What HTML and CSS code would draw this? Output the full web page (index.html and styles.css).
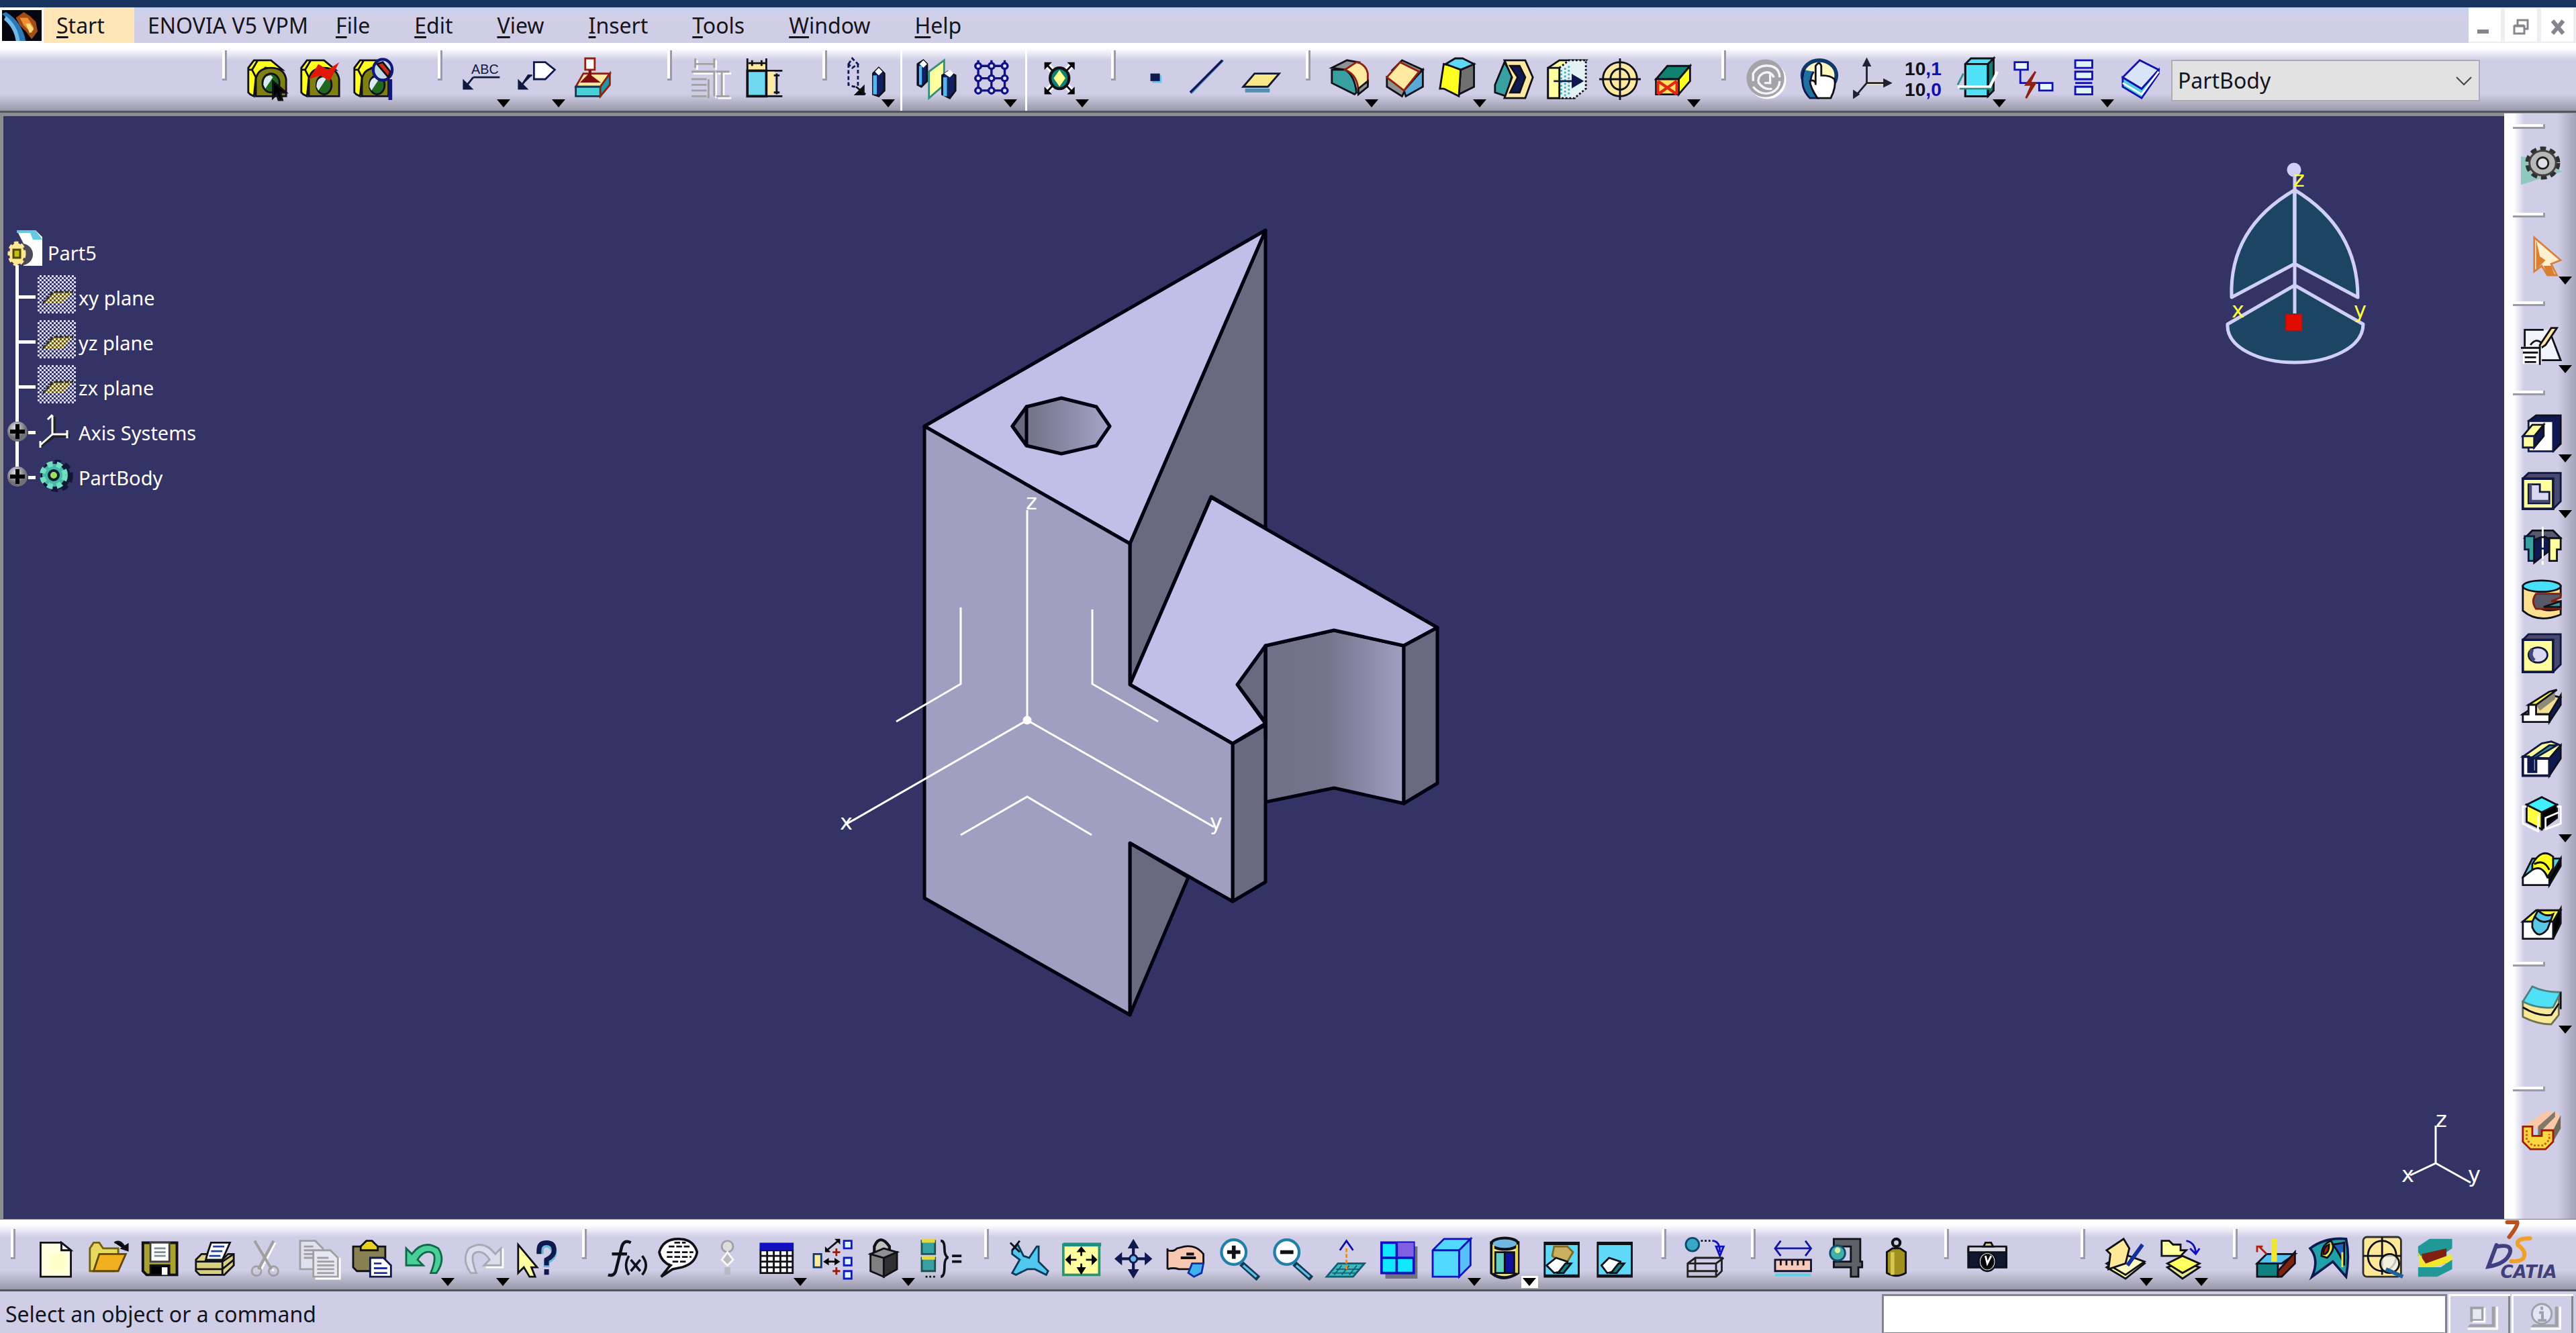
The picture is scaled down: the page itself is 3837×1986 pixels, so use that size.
FILE: index.html
```html
<!DOCTYPE html>
<html lang="en">
<head>
<meta charset="utf-8">
<title>CATIA V5 - Part5</title>
<link rel="stylesheet" href="styles.css">
</head>
<body>
<div class="titlebar"></div>

<header class="menubar">
  <svg class="app-logo" viewBox="0 0 20 16" preserveAspectRatio="none"><rect width="20" height="16" fill="#05060f"/><path d="M0 2q6 5 8 14h4Q10 6 2 1z" fill="#2a78b8"/><path d="M1 5q5 4 6 11h2Q8 8 2 3z" fill="#70b8e8"/><path d="M7 4l4-3 3 2 3 3 1 5-3 4-3-4-3-3z" fill="#a04c18"/><path d="M9 4l4 0 3 5-1 3-4-4z" fill="#f09030"/><path d="M12 7l2 0 2 3-2 2z" fill="#ffe080"/></svg>
  <nav class="menus" aria-label="Main menu">
    <button class="menu start"><u>S</u>tart</button>
    <button class="menu vpm">ENOVIA V5 VPM</button>
    <button class="menu"><u>F</u>ile</button>
    <button class="menu"><u>E</u>dit</button>
    <button class="menu"><u>V</u>iew</button>
    <button class="menu"><u>I</u>nsert</button>
    <button class="menu"><u>T</u>ools</button>
    <button class="menu"><u>W</u>indow</button>
    <button class="menu"><u>H</u>elp</button>
  </nav>
  <div class="window-controls">
    <button aria-label="Minimize"><svg viewBox="0 0 48 50"><path d="M13 34h17" stroke-width="6"/></svg></button>
    <button aria-label="Restore"><svg viewBox="0 0 48 50"><path d="M19 24v-7h15v13h-5M19 17h15" stroke-width="3"/><path d="M14 26h15v11H14zM14 25h15" stroke-width="3"/></svg></button>
    <button aria-label="Close"><svg viewBox="0 0 48 50"><path d="M17 18l16 19M33 18L17 37" stroke-width="6"/></svg></button>
  </div>
</header>

<div class="toolbar top-bar">
  <div></div>
  <div class="group">
    <i class="grip"></i>
    <button class="tool" aria-label="Select feature"><svg viewBox="0 0 22 22"><path d="M1 18V5l3-4h9l6 5-9-1-5 5-1 10-2-1z" fill="#ffff20"/><path d="M3 6l3-5M3 6l2 4M3 6H1"/><path d="M5 20V11q1-6 8-6t8 6v9z" fill="#808010"/><ellipse cx="13" cy="13" rx="4.500" ry="5" fill="#206820"/><path d="M9 14q0-5 4-5l1 1-4 6z" fill="#dde8f0" stroke="none"/><path d="M14 12v9l2-2 1 3h2l-1-4h3z" fill="#000"/></svg></button>
    <button class="tool" aria-label="Update feature"><svg viewBox="0 0 22 22"><path d="M1 18V5l3-4h9l6 5-9-1-5 5-1 10-2-1z" fill="#ffff20"/><path d="M3 6l3-5M3 6l2 4M3 6H1"/><path d="M5 20V11q1-6 8-6t8 6v9z" fill="#808010"/><ellipse cx="13" cy="14" rx="4" ry="5" fill="#206820"/><path d="M9 15q0-5 4-5l1 1-4 6z" fill="#dde8f0" stroke="none"/><path d="M5 11l5-8 5 3 6-4-5 10-5-3z" fill="#e01808" stroke="none"/></svg></button>
    <button class="tool" aria-label="Inspect feature"><svg viewBox="0 0 22 22"><path d="M1 18V5l3-4h9l6 5-9-1-5 5-1 10-2-1z" fill="#ffff20"/><path d="M3 6l3-5M3 6l2 4M3 6H1"/><path d="M5 20V11q1-6 8-6t6 6v9z" fill="#808010"/><ellipse cx="13" cy="14" rx="4" ry="5" fill="#206820"/><path d="M9 15q0-5 4-5l1 1-4 6z" fill="#dde8f0" stroke="none"/><ellipse cx="16" cy="6" rx="5" ry="5.500" fill="#c0d8e8" stroke="#101880" stroke-width="1.500"/><path d="M13 3l6 7 1-3-4-5z" fill="#d02818"/><path d="M20 11v11" stroke="#101880" stroke-width="2"/></svg></button>
  </div>
  <div class="group">
    <i class="grip"></i>
    <button class="tool more" aria-label="Text with leader"><svg viewBox="0 0 22 22"><text x="5" y="8" class="abc">ABC</text><path d="M6 10h14M6 10l-4 5M1 12v4h4z" stroke="#101840" fill="#101840"/></svg></button>
    <button class="tool more" aria-label="Flag note"><svg viewBox="0 0 22 22"><path d="M9 2h6l5 4-5 5H9z" fill="#fff" stroke="#101850"/><path d="M8 9H6l-4 6M1 12v4h4z" stroke="#101840" fill="#101840"/></svg></button>
    <button class="tool" aria-label="Datum"><svg viewBox="0 0 22 22"><path d="M2 15l4-7h14l-5 7z" fill="#ffe8a0" stroke="#902010"/><path d="M2 15h13v5H2z" fill="#48d0d8" stroke="#103850"/><path d="M15 15l5-7v6l-5 6z" fill="#2098a8" stroke="#902010"/><path d="M7 0h5v6H7z" fill="#fff" stroke="#902010"/><path d="M9.500 6v4M6 12l3-3 4 3z" fill="#801010" stroke="#801010" stroke-width="1.500"/></svg></button>
  </div>
  <div class="group">
    <i class="grip"></i>
    <button class="tool" aria-label="Constraint dialog" disabled><svg viewBox="0 0 22 22"><g stroke="#fff" transform="translate(1 1)"><path d="M2 0v5M12 0v5M2 2h10M0 7h12v13M16 7v13M13 7h7M13 20h7"/></g><g stroke="#a0a0a0"><path d="M2 0v5M12 0v5M2 3h10M0 7h12v13M16 7v13M13 7h7M13 20h7M0 11h8M0 14h8M0 17h8M0 20h8M9 11v10"/></g></svg></button>
    <button class="tool" aria-label="Constraint"><svg viewBox="0 0 22 22"><path d="M2 2h9v4H2z" fill="#ffe8a0" stroke="none"/><path d="M1.500 0v6M11.500 0v6M12 6.500h8M12 20h8"/><path d="M2 2.500h9M4 1v3M9 1v3"/><path d="M12 7h4v12h-4z" fill="#ffe8a0" stroke="none"/><path d="M17 8v11M15.500 9h3M15.500 18h3"/><path d="M1.500 6.500h10V20h-10z" fill="#70d8f0" stroke-width="1.300"/></svg></button>
  </div>
  <div class="group">
    <i class="grip"></i>
    <button class="tool more" aria-label="Translation"><svg viewBox="0 0 22 22"><path d="M1 3l2-3 3 3-3 2zM1 3v11l3 1 2-1V3" stroke-dasharray="2 1.200" stroke="#101850"/><path d="M5 15l5 4M9 15v4H5z" fill="#000"/><path d="M14 8l3-3 3 3v9l-3 3-3-1z" fill="#102060"/><path d="M15 9v10" stroke="#50b8f0" stroke-width="2"/><path d="M15 7l2-2 2 2-2 2z" fill="#fff" stroke="none"/></svg></button>
  </div>
  <div class="group split">
    <button class="tool" aria-label="Mirror"><svg viewBox="0 0 22 22"><path d="M1 3l3-2 2 2v9l-3 3-2-1z" fill="#102060"/><path d="M2.500 4v10" stroke="#50b8f0" stroke-width="1.500"/><path d="M2 3l2-2 2 2-2 2z" fill="#fff" stroke="none"/><path d="M7 7l8-6v13l-8 7z" fill="#ffffa0" stroke="#309078"/><path d="M14 9l3-2 4 2v8l-3 4-4-2z" fill="#102060"/><path d="M15.500 10v10" stroke="#50b8f0" stroke-width="2"/><path d="M15 8l3-2 2 2-2 2z" fill="#fff" stroke="none"/></svg></button>
    <button class="tool more" aria-label="Rectangular pattern"><svg viewBox="0 0 22 22"><g stroke="#101088" fill="#dfe0ff" stroke-width="1.200"><path d="M5 1v18M12 1v18M19 1v18M3 4h18M3 10.500h18M3 17h18"/><circle cx="5" cy="4" r="1.500"/><circle cx="12" cy="4" r="1.500"/><circle cx="19" cy="4" r="1.500"/><circle cx="5" cy="10.500" r="1.500"/><circle cx="12" cy="10.500" r="1.500"/><circle cx="19" cy="10.500" r="1.500"/><circle cx="5" cy="17" r="1.500"/><circle cx="12" cy="17" r="1.500"/><circle cx="19" cy="17" r="1.500"/></g></svg></button>
  </div>
  <div class="group split">
    <button class="tool more" aria-label="Scaling"><svg viewBox="0 0 22 22"><path d="M3 3l14 15M17 3L3 18" stroke="#fff" stroke-width="3"/><path d="M3 3l14 15M17 3L3 18"/><path d="M2 2h4L2 6zM18 2h-4l4 4zM2 19h4l-4-4zM18 19h-4l4-4z" fill="#000" stroke="none"/><ellipse cx="10" cy="10.500" rx="5" ry="5.500" fill="#108070" stroke-width="1.500"/><path d="M10 7l2.500 3.500L10 14l-2.500-3.500z" fill="#ffff90" stroke="#ffff90"/></svg></button>
  </div>
  <div class="group">
    <i class="grip"></i>
    <button class="tool" aria-label="Point"><svg viewBox="0 0 22 22"><rect x="9" y="9" width="5" height="4" fill="#68c8f0" stroke="none"/><rect x="8" y="8" width="5" height="4" fill="#101850" stroke="none"/></svg></button>
    <button class="tool" aria-label="Line"><svg viewBox="0 0 22 22"><path d="M1.500 18.500l17-17.500" stroke="#5090d0"/><path d="M1 18L18 1" stroke="#101850" stroke-width="1.200"/></svg></button>
    <button class="tool" aria-label="Plane"><svg viewBox="0 0 22 22"><path d="M2 17h13" stroke="#5090b0" stroke-width="2"/><path d="M1 15l6-7h13l-6 7z" fill="#f8e888" stroke="#101830"/></svg></button>
  </div>
  <div class="group">
    <i class="grip"></i>
    <button class="tool more" aria-label="Edge fillet"><svg viewBox="0 0 22 22"><path d="M1 5l8-4 6 1-7 4z" fill="#909090"/><path d="M1 6h7q5 3 6 12l-1 1-12-6z" fill="#38a0a0"/><path d="M8 6l6-4q5 1 6 6v6l-5 4q0-9-7-12z" fill="#ffe8a0" stroke="#902010"/><path d="M20 12v3l-5 4v-3z" fill="#909090"/></svg></button>
    <button class="tool" aria-label="Chamfer"><svg viewBox="0 0 22 22"><path d="M4 6l5-5 11 5-3 2z" fill="#909090"/><path d="M1 10v5l8 5 2-4z" fill="#909090"/><path d="M20 6v9l-9 5-1-3 8-9z" fill="#58a8d8"/><path d="M1 10l7-8 10 5-8 10z" fill="#ffe8a0" stroke="#902010"/></svg></button>
    <button class="tool more" aria-label="Draft angle"><svg viewBox="0 0 22 22"><path d="M12 6l7-3v12l-8 4z" fill="#707070"/><path d="M3 3l9 2-1 15-8-4H1z" fill="#ffff20"/><path d="M4 3l5-3h4l6 3-7 3z" fill="#60d8f8"/></svg></button>
    <button class="tool" aria-label="Shell"><svg viewBox="0 0 22 22"><path d="M1 14L6 2l4 7-3 11-6-2z" fill="#38a0a0"/><path d="M6 1h11l4 9-4 11H6l4-11z" fill="#ffe8a0"/><path d="M9 4h5l3 6-3 8H9l4-8z" fill="#101850"/></svg></button>
    <button class="tool" aria-label="Thickness"><svg viewBox="0 0 22 22"><path d="M1 5l6-4h14l-6 5v15H1z" fill="#ffffa0"/><path d="M7 5l5-4h9v15l-6 5H7z" fill="#e4f2f6" stroke-dasharray="1 1"/><path d="M8 6v14M10 5v15M12 4v16" stroke="#48b0b0" stroke-dasharray="1 1"/><path d="M1 5h6v16H1z" fill="#ffffa0"/><path d="M4 12h13M14 9l5 3-5 3z" stroke="#101850" fill="#101850"/></svg></button>
    <button class="tool" aria-label="Thread"><svg viewBox="0 0 22 22"><ellipse cx="11" cy="11" rx="9" ry="9" fill="#ffe8a0"/><ellipse cx="11" cy="11" rx="5" ry="5.500"/><path d="M11 0v22M0 11h22"/></svg></button>
    <button class="tool more" aria-label="Remove face"><svg viewBox="0 0 22 22"><path d="M2 11l6-7h12l-6 7z" fill="#108070"/><path d="M14 11l6-7v8l-6 7z" fill="#ffff20"/><path d="M2 11h12v8H2z" fill="#ffe060"/><path d="M3 12l10 7M13 12L3 19M3 12v7M13 12v7" stroke="#e02818" stroke-width="1.500"/></svg></button>
  </div>
  <div class="group">
    <i class="grip"></i>
    <button class="tool" aria-label="Update all" disabled><svg viewBox="0 0 22 22"><ellipse cx="11.500" cy="11.500" rx="10" ry="10" fill="#fff" stroke="none"/><ellipse cx="10.500" cy="10.500" rx="10" ry="10" fill="#a4a4a8" stroke="none"/><path d="M4 12V8q3-5 9-4 5 1 5 6M15 10q-2-4-6-2-3 2-2 5 3 4 7 3M4 15q4 5 10 3 4-2 4-6M13 8v5h-3" stroke="#f4f4fa" stroke-width="1.200"/></svg></button>
    <button class="tool" aria-label="Manual update"><svg viewBox="0 0 22 22"><ellipse cx="11" cy="9" rx="9" ry="8" fill="#fff8c0" stroke="#103868" stroke-width="2"/><path d="M3 6q-3 9 3 15h4q-6-8-2-14" fill="#2070a0" stroke="#101850"/><path d="M9 14V4q2-3 3 0v5q5 0 7 2 1 4-2 10h-7q-4-6-4-9 2-1 3 1z" fill="#fff"/></svg></button>
    <button class="tool" aria-label="Axis system"><svg viewBox="0 0 22 22"><path d="M8 12h9v2H8zM6 3l2 9" fill="#ffe8a0" stroke="none"/><path d="M8 2v11h10M8 13l-6 7" stroke="#202030"/><path d="M6 4l2-4 2 4zM17 11l4 2-4 2zM1 21v-4l3 2z" fill="#202030" stroke="#202030" stroke-width=".5"/></svg></button>
    <button class="tool" aria-label="Mean dimensions"><svg viewBox="0 0 22 22"><text x="0" y="9" class="dims">10<tspan fill="#1010b0">,1</tspan></text><text x="0" y="20" class="dims">10<tspan fill="#1010b0">,0</tspan></text></svg></button>
    <button class="tool more" aria-label="Sectioning"><svg viewBox="0 0 22 22"><path d="M4 3l3-3h12l-3 3v17H4z" fill="#50e0f8"/><path d="M16 3l3-3v17l-3 3z" fill="#108070"/><path d="M4 3h12v17H4z"/><path d="M0 15h17l4-8" stroke="#fff" stroke-width="1.500"/><path d="M0 14l3-6M1 16h16" stroke="#309090"/></svg></button>
    <button class="tool" aria-label="Update error"><svg viewBox="0 0 22 22"><path d="M1 2h7v4H1zM14 13h7v4h-7z" fill="#e8f8f8" stroke="#1010b0"/><path d="M4 6v7h10" stroke="#1010b0"/><path d="M12 7l-5 7h3l-3 7 5-8h-3z" fill="#902010" stroke="#902010"/></svg></button>
    <button class="tool more" aria-label="Historical graph"><svg viewBox="0 0 22 22"><g fill="#e0f4f8" stroke="#1010b0"><path d="M5 1h9v4H5zM5 7h9v4H5zM5 15h9v4H5zM5 13h9"/></g></svg></button>
    <button class="tool" aria-label="Work on support"><svg viewBox="0 0 22 22"><path d="M1 10v5l10 6 9-13V6L11 16z" fill="#50d0e0" stroke="#1010b0"/><path d="M1 10l9-9 10 5-9 10z" fill="#d8e4f8" stroke="#1010b0"/><path d="M1 13l10 6 9-12" stroke="#fff"/></svg></button>
    <div class="body-picker">
      <select aria-label="In work object"><option>PartBody</option></select>
      <svg viewBox="0 0 24 14"><path d="M1 1l11 11L23 1" fill="none" stroke="#444" stroke-width="2"/></svg>
    </div>
  </div>
</div>

<main class="workspace">
  <section class="viewport">
    <svg class="scene" viewBox="5 173 3725 1643">
      <defs>
        <linearGradient id="bore"><stop offset="0" stop-color="#6b6b82"/><stop offset="0.250" stop-color="#77778f"/><stop offset="1" stop-color="#a5a5c8"/></linearGradient>
        <linearGradient id="arc"><stop offset="0" stop-color="#707088"/><stop offset="0.450" stop-color="#74748c"/><stop offset="1" stop-color="#a0a0c2"/></linearGradient>
      </defs>
      <g stroke="#000010" stroke-width="5" stroke-linejoin="round" stroke-linecap="round">
        <path d="M1683 810L1885 343V787L1804 740 1683 1020z" fill="#69697f"/>
        <path d="M1377 635L1885 343 1683 810z" fill="#bfbfe8"/>
        <path d="M1508 635L1529 606 1581 593 1633 606 1653 635 1633 664 1581 676 1529 664z" fill="url(#bore)"/>
        <path d="M1508 635L1529 606V664z" fill="#69697f"/>
        <path d="M1683 1256L1770 1307 1683 1512z" fill="#69697f"/>
        <path d="M1885 962L1987 939 2091 962V1197L1987 1174 1885 1195z" fill="url(#arc)"/>
        <path d="M1885 962V1076L1843 1020z" fill="#69697f"/>
        <path d="M1683 1020L1804 741 2141 935 2091 962 1987 939 1885 962 1843 1020 1885 1078 1836 1108z" fill="#bfbfe8"/>
        <path d="M2091 962L2141 935V1167L2091 1197z" fill="#69697f"/>
        <path d="M1836 1108L1885 1080V1314L1836 1343z" fill="#69697f"/>
        <path d="M1885 962V1100" fill="none"/>
        <path d="M1377 635L1683 810V1020L1836 1108V1343L1683 1256V1512L1377 1338z" fill="#9f9fc1"/>
      </g>
      <g fill="none" stroke="#fff" stroke-width="3">
        <path d="M1530 760V1073L1262 1227M1530 1073L1808 1232"/>
        <path d="M1431 905V1019L1335 1075M1627 908V1019L1725 1075M1431 1244L1530 1187 1626 1244"/>
        <circle cx="1530" cy="1073" r="5" fill="#fff"/>
        <path d="M3628 1677V1733L3590 1751M3628 1733L3680 1762"/>
      </g>
      <g class="axis-label" fill="#fff">
        <text x="1528" y="759">z</text><text x="1251" y="1236">x</text><text x="1802" y="1236">y</text>
        <text x="3628" y="1679">z</text><text x="3577" y="1761">x</text><text x="3676" y="1761">y</text>
      </g>
      <g fill="#1b4562" stroke="#cfcff8" stroke-width="5" stroke-linejoin="round">
        <path d="M3418 283Q3320 340 3324 443L3418 393z"/>
        <path d="M3418 283Q3512 340 3512 443L3418 393z"/>
        <path d="M3418 425L3520 483C3520 518 3470 540 3418 540S3316 518 3318 483z"/>
        <path d="M3418 253V468"/>
        <circle cx="3417" cy="253" r="8" fill="#cfcff8"/>
        <rect x="3405" y="468" width="24" height="25" fill="#e00c00" stroke="#a01818" stroke-width="2"/>
      </g>
      <g class="axis-label" fill="#ffff40">
        <text x="3416" y="278">z</text><text x="3324" y="473">x</text><text x="3506" y="473">y</text>
      </g>
    </svg>
    <ul class="tree">
      <li><svg viewBox="0 0 64 67"><path d="M20 0h28l10 10v43H30V20z" fill="#fff"/><path d="M20 0h28l10 14H44l-4-10H20z" fill="#68c8e0"/><circle cx="28" cy="36" r="16" fill="#4a4a58"/><ellipse cx="20" cy="35" rx="11" ry="16" fill="#ffe890" stroke="#ffe890" stroke-width="5" stroke-dasharray="6 4"/><rect x="15" y="29" width="10" height="12" fill="#c8c010" stroke="#504800" stroke-width="3"/><path d="M18 52h5v15h-5z" fill="#fff"/></svg><span>Part5</span></li>
      <li><svg viewBox="0 0 110 67"><defs><pattern id="dither" width="6" height="6" patternUnits="userSpaceOnUse"><path d="M0 0h3v3H0zM3 3h3v3H3z" fill="#d8d8f0"/></pattern><pattern id="dither-plane" width="6" height="6" patternUnits="userSpaceOnUse"><path d="M0 0h6v6H0z" fill="#55553c"/><path d="M0 0h3v3H0zM3 3h3v3H3z" fill="#ffe890"/></pattern><g id="plane"><path d="M18 0h5v67h-5zM23 30h25v5H23z" fill="#fff"/><path d="M51 0h57v57H51z" fill="url(#dither)"/><path d="M59 42l15-18h30L88 42z" fill="url(#dither-plane)"/><path d="M59 42l15-17h30" fill="none" stroke="#303028" stroke-width="3" stroke-dasharray="6 2"/></g></defs><use href="#plane"/></svg><span>xy plane</span></li>
      <li><svg viewBox="0 0 110 67"><use href="#plane"/></svg><span>yz plane</span></li>
      <li><svg viewBox="0 0 110 67"><use href="#plane"/></svg><span>zx plane</span></li>
      <li><svg viewBox="0 0 110 67"><defs><radialGradient id="ball" cx=".4" cy=".3"><stop offset="0" stop-color="#e0e0e8"/><stop offset="1" stop-color="#707078"/></radialGradient><g id="expand"><circle cx="21" cy="32" r="15" fill="url(#ball)"/><path d="M21 21v22M10 32h22" stroke="#000" stroke-width="6"/><path d="M37 31h11v5H37z" fill="#fff"/></g></defs><path d="M18 0h5v67h-5z" fill="#fff"/><use href="#expand"/><path d="M75 10v28h24M75 38L54 54" fill="none" stroke="#222" stroke-width="6"/><path d="M73 8v28h22M73 36L55 52M66 14l7-7M95 30v12M55 46v10" fill="none" stroke="#fff" stroke-width="3"/></svg><span>Axis Systems</span></li>
      <li><svg viewBox="0 0 110 67"><path d="M18 0h5v20h-5z" fill="#fff"/><use href="#expand"/><circle cx="80" cy="31" r="20" fill="#101838" stroke="#101838" stroke-width="8" stroke-dasharray="9 6"/><circle cx="75" cy="30" r="17" fill="#48b8a8" stroke="#70e0c0" stroke-width="8" stroke-dasharray="8 6"/><circle cx="75" cy="30" r="7" fill="#a0e060" stroke="#102030" stroke-width="4"/></svg><span>PartBody</span></li>
    </ul>
  </section>

  <aside class="side-bar">
    <div class="group">
      <i class="grip"></i>
      <button class="tool" aria-label="Workbench"><svg viewBox="0 0 22 22"><path d="M0 5l8 1 14 7L0 20z" fill="#90c8c0" stroke="none"/><ellipse cx="11.500" cy="8.500" rx="8" ry="7.500" fill="#b8b8b8" stroke="#303030" stroke-width="2.500" stroke-dasharray="3 2"/><ellipse cx="11.500" cy="8.500" rx="7" ry="6.500" fill="#b8b8b8" stroke="#404040"/><ellipse cx="11.500" cy="8.500" rx="3" ry="3" fill="#e0e0e8" stroke="#202020"/></svg></button>
    </div>
    <div class="group">
      <i class="grip"></i>
      <button class="tool more" aria-label="Select"><svg viewBox="0 0 22 22"><path d="M7 1v18l4-3 3 5h5l-3-6 5-2z" fill="#fff0d0" stroke="#d88040"/><path d="M8 2v16l3-3 2-2-3-2z" fill="#d88030" stroke="none"/><path d="M12 16l2 5h4l-2-5z" fill="#d88030" stroke="none"/></svg></button>
    </div>
    <div class="group">
      <i class="grip"></i>
      <button class="tool more" aria-label="Sketcher"><svg viewBox="0 0 22 22"><path d="M2 3h13l5 16H2z" fill="#f4f4fc" stroke="none"/><path d="M12 3H2v9M16 6l5 13H11M5 11q3-4 6-1"/><path d="M10 11l6-9 3 0-6 9-3 2z" fill="#ffe8a0"/><path d="M1 12h10v9H1z" fill="#fff" stroke="none"/><path d="M0 12.500h10v9M1 15h8M2 17.500h6M2 20h6"/></svg></button>
    </div>
    <div class="group">
      <i class="grip"></i>
      <button class="tool more" aria-label="Pad"><svg viewBox="0 0 22 22"><path d="M4 4l4-3h13v15l-4 4z" fill="#101850"/><path d="M4 4h13v16H4z" fill="#fff" stroke="#101850"/><path d="M7 12l5-6v6l-5 6z" fill="#101850"/><path d="M1 12l5-6h6l-5 6z" fill="#ffffa0"/><path d="M1 12h6v6H1z" fill="#ffffa0" stroke="#101840"/></svg></button>
      <button class="tool more" aria-label="Pocket"><svg viewBox="0 0 22 22"><path d="M1 5l3-3h17v15l-4 4z" fill="#484870" stroke="#101840"/><path d="M1 5h16v16H1z" fill="#ffffa0" stroke="#101840" stroke-width="1.300"/><path d="M4 8h6v4h5v6H4z" fill="#d8d8f0" stroke="#101840"/><path d="M5 8v9h10" stroke="#484870" stroke-width="1.500"/></svg></button>
      <button class="tool" aria-label="Shaft"><svg viewBox="0 0 22 22"><path d="M2 7l4-4h11l4 4-9 2z" fill="#585870"/><path d="M2 6h5v13H4v-6H2z" fill="#38a0a0" stroke="#101840"/><path d="M7 8l5-2 4 2v5l-4 3-5 4z" fill="#101850"/><path d="M15 7h6v6h-2v6h-4z" fill="#ffffa0"/><path d="M11.500 1v20" stroke="#fff" stroke-dasharray="5 1"/></svg></button>
      <button class="tool" aria-label="Groove"><svg viewBox="0 0 22 22"><path d="M1 4v13q8 7 20 2v-3q-8 2-12-1V9q4 2 12 0V4z" fill="#ffe090"/><ellipse cx="11" cy="4" rx="10" ry="3" fill="#48e0f8"/><path d="M8 8h13v2l-5 2h5v4H8q-3-4 0-8z" fill="#585868" stroke="#802010"/><path d="M12 15l9-3v3z" fill="#38a0a0"/></svg></button>
      <button class="tool" aria-label="Hole"><svg viewBox="0 0 22 22"><path d="M1 4l3-3h17v16l-4 4z" fill="#484870" stroke="#101840"/><path d="M1 4h16v17H1z" fill="#ffffa0" stroke="#101840" stroke-width="1.300"/><ellipse cx="9" cy="12" rx="5" ry="4" fill="#d8d8f0" stroke="#101840"/><path d="M6 9q-2 3 1 6" stroke="#484870" stroke-width="2"/></svg></button>
      <button class="tool" aria-label="Rib"><svg viewBox="0 0 22 22"><path d="M1 15L16 5l5 1-6 9z" fill="#f0e090"/><path d="M15 15l6-10v5l-6 9z" fill="#101850"/><path d="M8 10L18 3v4l-8 6z" fill="#908878" stroke="none"/><path d="M4 10L15 3l4-1L8 10z" fill="#ffff40"/><path d="M1 15h3v-5h4v5h7v4H1z" fill="#fff"/></svg></button>
      <button class="tool" aria-label="Slot"><svg viewBox="0 0 22 22"><path d="M1 9L11 2l5-1 5 2-6 7z" fill="#ffffa0" stroke="#101840"/><path d="M15 10l6-7v7l-6 9z" fill="#101850"/><path d="M5 10L15 3l4 0-12 7z" fill="#309090" stroke="#101840"/><path d="M1 9h3v8h4v-7h7v9H1z" fill="#fff" stroke="#101840" stroke-width="1.300"/><path d="M4 9h3v8H4z" fill="#101850" stroke="none"/></svg></button>
      <button class="tool more" aria-label="Stiffener"><svg viewBox="0 0 22 22"><path d="M3 6l8 4v9l-8-4z" fill="#ffff40"/><path d="M11 10l8-4v7l-8 6z" fill="#000"/><path d="M3 6l8-4 8 4-8 4z" fill="#40f0ff"/><path d="M3 7H1v9l8 4v-9M19 7h2v9l-8 3v-6l7-3" stroke="#fff"/></svg></button>
      <button class="tool" aria-label="Multi-sections solid"><svg viewBox="0 0 22 22"><path d="M1 15L6 5l15 0-6 14z" fill="#58d0e0"/><path d="M15 15l6-10v4l-6 10z" fill="#000"/><path d="M6 8q5-9 11-4l0 6-3 5q-2-6-8-4z" fill="#ffff20"/><path d="M7 8q5-3 8 3"/><path d="M1 15l5-4q5-3 8 4h1v4H1z" fill="#fff"/></svg></button>
      <button class="tool" aria-label="Removed multi-sections solid"><svg viewBox="0 0 22 22"><path d="M1 10l7-6h13l-4 6z" fill="#ffff40"/><path d="M17 10l4-7v8l-4 8z" fill="#000"/><path d="M1 10h16v9H1z" fill="#fff"/><path d="M6 10L9 4q4 4 8 2l-3 8q-5 6-8-1z" fill="#58c8e8"/><path d="M7 7q4 5 9 2"/></svg></button>
    </div>
    <div class="group">
      <i class="grip"></i>
      <button class="tool more" aria-label="Thick surface"><svg viewBox="0 0 22 22"><path d="M1 9q8 2 15 2l4-5v10l-4 5q-7 0-15-4z" fill="#f8e898" stroke="#707050"/><path d="M1 12q8 5 15 4l4-6"/><path d="M1 9l5-8q6 3 15 3l-4 8q-8 1-16-3z" fill="#50e0f8" stroke="#508080"/><path d="M21 4v9"/></svg></button>
    </div>
    <div class="group">
      <i class="grip"></i>
      <button class="tool" aria-label="Apply material"><svg viewBox="0 0 22 22"><path d="M1 9L13 1h4L9 10z" fill="#f8c8a8" stroke="none"/><path d="M10 10L18 1l3 3-4 7z" fill="#f8c8a8" stroke="none"/><path d="M9 9L18 1v3l-7 7v3H9z" fill="#807868" stroke="none"/><path d="M17 11l4-8v7l-4 7z" fill="#706858" stroke="none"/><path d="M1 9h5v5h5v-3h6v6l-4 4H5l-4-4z" fill="#f8d840" stroke="#a01808"/><path d="M3 11v5l3 3h6l3-3v-3" stroke="#d05010" stroke-dasharray="1 1"/></svg></button>
    </div>
  </aside>
</main>

<div class="toolbar bottom-bar">
  <div></div>
  <div class="group">
    <i class="grip"></i>
    <button class="tool" aria-label="New"><svg viewBox="0 0 22 22"><path d="M3 3h11l5 4v14H3z" fill="#ffffe0"/><path d="M14 3v4h5z" fill="#fff"/><path d="M8 9h8v9H8z" fill="#ffffc8" stroke="none"/></svg></button>
    <button class="tool" aria-label="Open"><svg viewBox="0 0 22 22"><path d="M1 18V6l2-3h3l2 3h8v4l-2 8z" fill="#e8d860" stroke="#706010"/><path d="M3 18l3-9h14l-4 9z" fill="#f0b020" stroke="#604808"/><path d="M14 3q4-2 6 4M18 6l3 1V4z" fill="#000"/></svg></button>
    <button class="tool" aria-label="Save"><svg viewBox="0 0 22 22"><path d="M1 3h18v17H3l-2-2z" fill="#a8a030" stroke-width="1.400"/><path d="M5 3h10v10H5z" fill="#fff" stroke="#404040"/><path d="M7 6h6M7 8h6M7 10h6" stroke="#809090"/><path d="M5 15h10v5H5z" fill="#000"/><path d="M11 16h3v4h-3z" fill="#fff" stroke="none"/></svg></button>
    <button class="tool" aria-label="Print"><svg viewBox="0 0 22 22"><path d="M6 12L9 3h10l-4 9z" fill="#fff"/><path d="M10 5h6M9 7.500h6M8 10h6" stroke="#2040a0"/><path d="M1 12l3-3h3l-1 4h8l4-4h3v6l-5 5H3l-2-2z" fill="#d8d080"/><path d="M1 13h14l6-4M1 17h14l6-5M15 13v7"/></svg></button>
    <button class="tool" aria-label="Cut" disabled><svg viewBox="0 0 22 22"><g stroke="#fff" transform="translate(1 1)"><path d="M4 2l9 15M14 2L6 17"/></g><g stroke="#a0a0a0"><path d="M4 2l9 15M14 2L6 17" stroke-width="1.500"/><circle cx="5" cy="18" r="2.500"/><circle cx="14" cy="18" r="2.500"/></g></svg></button>
    <button class="tool" aria-label="Copy" disabled><svg viewBox="0 0 22 22"><path d="M0 2h8l4 4v11H0z" fill="#e0e0f0" stroke="#a0a0a0"/><path d="M2 5h5M2 7h5M2 9h5M2 11h5" stroke="#a0a0a0"/><path d="M7 7h9l4 4v10H7z" fill="#e8e8f4" stroke="#a0a0a0"/><path d="M9 11h6M9 13h9M9 15h9M9 17h9M9 19h9" stroke="#a0a0a0"/><path d="M8 22h13V11" stroke="#fff"/></svg></button>
    <button class="tool" aria-label="Paste"><svg viewBox="0 0 22 22"><path d="M0 5h17v13H2l-2-2z" fill="#888050"/><path d="M4 5l3-3h3l3 3v2H4z" fill="#e8d020"/><path d="M9 11h7l4 4v6H9z" fill="#fff" stroke="#101850"/><path d="M11 14h4M11 16.500h7M11 19h7" stroke="#2030a0"/></svg></button>
    <button class="tool more" aria-label="Undo"><svg viewBox="0 0 22 22"><path d="M0 6v9h9l-3-3q3-5 7-4t0 11h3q5-7 1-13-8-5-14 3z" fill="#48d098" stroke="#106848"/></svg></button>
    <button class="tool more" aria-label="Redo" disabled><svg viewBox="0 0 22 22"><path d="M21 6v9h-9l3-3q-3-5-7-4t0 11H5Q0 12 4 6q8-5 14 3z" fill="#dcdcec" stroke="#a8a8b0"/><path d="M22 6v10h-9" stroke="#fff"/></svg></button>
    <button class="tool" aria-label="What's this"><svg viewBox="0 0 22 22"><path d="M1 4v15l3-3 3 5h3l-2-5h3z" fill="#ffffa0"/><path d="M13 9V7q0-3 3-3t4 4q0 3-4 5v3" stroke="#68b8d8" stroke-width="3"/><path d="M12 9V7q0-4 4-4t4 4q0 3-4 5v3M16 17v3" stroke="#101850" stroke-width="2.500"/></svg></button>
  </div>
  <div class="group">
    <i class="grip"></i>
    <button class="tool" aria-label="Formula"><svg viewBox="0 0 22 22"><path d="M13 3q-4-2-5 3L5 18q-1 3-4 2M3 9h8" stroke-width="1.600"/><path d="M12 10q-3 5 0 10M19 10q4 5 0 10M13 12l5 6M18 12l-5 6" stroke-width="1.300"/></svg></button>
    <button class="tool" aria-label="Comment"><svg viewBox="0 0 22 22"><path d="M6 15Q1 13 0 8q2-7 10-7t10 7q-1 6-8 8l-5 1-6 4 4-5z" fill="#fff" stroke-width="1.300"/><path d="M5 5h11M4 8h14M4 10.500h13M7 13h8M8 3h6" stroke-dasharray="3 1"/></svg></button>
    <button class="tool narrow" aria-label="Check" disabled><svg viewBox="0 0 22 22"><ellipse cx="8" cy="5" rx="3" ry="3" fill="#ddd" stroke="#a0a0a8"/><path d="M8 8l3 4-3 3-3-3z" fill="#bbb" stroke="#f8f8f8"/><path d="M8 16v4" stroke="#b8b8c0" stroke-width="3"/></svg></button>
    <button class="tool more" aria-label="Design table"><svg viewBox="0 0 22 22"><path d="M1 7h17v12H1z" fill="#fff"/><path d="M1 10h17M1 13h17M1 16h17M4.500 7v12M8 7v12M11.500 7v12M15 7v12"/><path d="M.5 3h18v4H.5z" fill="#1010c0" stroke="none"/></svg></button>
    <button class="tool" aria-label="Relations"><svg viewBox="0 0 22 22"><g fill="#dff4ff" stroke="#1018c0"><path d="M16 2h4v4h-4zM16 11h4v4h-4zM16 18h4v4h-4z"/></g><path d="M0 9h4v7H0z" fill="#ffe898" stroke="#103870"/><path d="M6 13h7M7 7l6-5"/><path d="M5 13l3-2v4zM14 13l-3-2v4zM11 1h3v3zM6 5v3h3z" fill="#000" stroke="none"/><path d="M10 8h4M12 6v4M10 18h4M12 16v4" stroke="#902010"/></svg></button>
    <button class="tool more" aria-label="Lock parameters"><svg viewBox="0 0 22 22"><path d="M4 10V5q3-7 8 0v6" fill="#c0c0c0" stroke-width="1.500"/><path d="M2 9l7 2v10l-7-3z" fill="#808080"/><path d="M9 11l7-3v9l-7 4z" fill="#303030"/><path d="M2 9l7-3 7 2-7 3z" fill="#909090"/></svg></button>
    <button class="tool" aria-label="Equivalent dimensions"><svg viewBox="0 0 22 22"><path d="M0 2h7v7H0zM0 11h7v7H0z" fill="#38a0a0" stroke="#205050"/><path d="M0 2h7M0 11h7" stroke="#e8d840" stroke-width="2"/><path d="M2 21h5" stroke-dasharray="1 1"/><path d="M10 2q2 0 2 4t2 5q-2 0-2 5t-2 5M16 10h5M16 13h5" stroke-width="1.300"/></svg></button>
  </div>
  <div class="group">
    <i class="grip"></i>
    <button class="tool" aria-label="Fly mode"><svg viewBox="0 0 22 22"><path d="M2 7l3-3 3 6 3 1 4-6 1 0v8l5 5-1 2-6-3-4 0-6 3-2-1 4-7-4-3z" fill="#50c8f0" stroke="#103858"/><path d="M1 3l5 5M6 2L2 7"/></svg></button>
    <button class="tool" aria-label="Fit all in"><svg viewBox="0 0 22 22"><path d="M1 4h19v16H1z" fill="#ffffa0" stroke="#309070" stroke-width="1.300"/><path d="M1 3h20v2H1z" fill="#209080" stroke="none"/><path d="M10.500 6v4M10.500 14v5M3 12h5M13 12h5"/><path d="M8 8l2.500-3L13 8zM8 16l2.500 4 2.500-4zM5 9l-3 3 3 3zM16 9l3 3-3 3z" fill="#000" stroke="none"/></svg></button>
    <button class="tool" aria-label="Pan"><svg viewBox="0 0 22 22"><path d="M10 3v17M2 11.500h17" stroke="#101850" stroke-width="1.500"/><path d="M7 6l3-5 3 5zM7 17l3 5 3-5zM4 8l-4 3.500L4 15zM16 8l4 3.500-4 3.500z" fill="#101850" stroke="none"/><circle cx="10" cy="11.500" r="2" fill="#68b8e8" stroke="#101850"/></svg></button>
    <button class="tool" aria-label="Rotate"><svg viewBox="0 0 22 22"><path d="M0 7q3 1 5-1l4-1q6-1 10 4v5l-5 1-2 2H6q-3-1-6 0" fill="#f8c8b0"/><path d="M7 11h8M10 9h4" stroke-width="1.500"/><path d="M0 6v11"/><path d="M13 14l6 0-1 5-4 2-3-2z" fill="#40b0f0" stroke="#1030a0"/></svg></button>
    <button class="tool" aria-label="Zoom in"><svg viewBox="0 0 22 22"><path d="M11 14l9 8" stroke="#103858" stroke-width="3"/><path d="M12 15l7 6" stroke="#60c0e0" stroke-width="1.200"/><circle cx="7" cy="8" r="6.500" fill="#fff" stroke="#2080a8" stroke-width="1.500"/><path d="M7 4.500v7M3.500 8h7" stroke-width="2"/></svg></button>
    <button class="tool" aria-label="Zoom out"><svg viewBox="0 0 22 22"><path d="M11 14l9 8" stroke="#103858" stroke-width="3"/><path d="M12 15l7 6" stroke="#60c0e0" stroke-width="1.200"/><circle cx="7" cy="8" r="6.500" fill="#fff" stroke="#2080a8" stroke-width="1.500"/><path d="M3.500 8h7" stroke-width="2"/></svg></button>
    <button class="tool" aria-label="Normal view"><svg viewBox="0 0 22 22"><path d="M0 21l6-7h14l-6 7z" fill="#40b8c0" stroke="#106070"/><path d="M3 19h12M5 17h12M8 15l-4 5M12 15l-4 5M16 15l-4 5" stroke="#106070" stroke-width=".6"/><path d="M10.500 17V6" stroke="#e09030" stroke-dasharray="2 1"/><path d="M7 7l3.500-5L14 7" stroke="#1010a0"/></svg></button>
    <button class="tool" aria-label="Multi view"><svg viewBox="0 0 22 22"><path d="M3 5h17v17H3z" fill="#707080" stroke="none"/><path d="M1 3h17v16H1z" fill="#10e8ff" stroke="#1010c0" stroke-width="1.300"/><path d="M9 3h9v8H9z" fill="#8060e0" stroke="none"/><path d="M9 3v16M1 11h17" stroke="#1010c0" stroke-width="1.300"/></svg></button>
    <button class="tool more" aria-label="Isometric view"><svg viewBox="0 0 22 22"><path d="M0 7l6-6h14l-6 6v14H0z" fill="#50d8ff" stroke="#1010c0"/><path d="M14 7l6-6v14l-6 6z" fill="#58c0f8" stroke="#1010c0"/><path d="M0 7h14" stroke="#1010c0"/></svg></button>
    <button class="tool more lit" aria-label="Shading with edges"><svg viewBox="0 0 22 22"><path d="M2 3v16q6 5 14 0V3z" fill="#e8e090" stroke-width="1.600"/><path d="M4 8h5v11H4z" fill="#60d0c0"/><path d="M9 8h5v11H9z" fill="#1010a0"/><ellipse cx="9" cy="3.500" rx="7" ry="3" fill="#70b8e0" stroke-width="1.400"/><path d="M3 4v15M15.500 4v15" stroke="#e8d840"/></svg></button>
    <button class="tool" aria-label="Hide or show"><svg viewBox="0 0 22 22"><path d="M1 3h18v18H1z" fill="#60d8f8"/><path d="M1 3.500h18M1 20.500h18" stroke-width="1.500"/><path d="M6 5h7l3 3-3 5H9l-4-3z" fill="#c8b060" stroke="#806820"/><path d="M2 15l5-4 6 2-2 5-5 1z" fill="#fff"/><path d="M8 19l4-5 3 0-4 5z" fill="#108080"/></svg></button>
    <button class="tool" aria-label="Swap visible space"><svg viewBox="0 0 22 22"><path d="M1 3h18v18H1z" fill="#60d8f8"/><path d="M1 3.500h18M1 20.500h18" stroke-width="1.500"/><path d="M3 15l4-4 6 2-2 5-5 1z" fill="#fff"/><path d="M8 19l4-5 3 0-4 5z" fill="#108080"/></svg></button>
  </div>
  <div class="group">
    <i class="grip"></i>
    <button class="tool" aria-label="Catalog browser"><svg viewBox="0 0 22 22"><circle cx="3.500" cy="4" r="3.500" fill="#38a8c8" stroke="#104870"/><path d="M8 2h6" stroke-dasharray="1 1"/><path d="M14 2q4 0 4 6M16 5h4l-2 5z" stroke="#1010c0" fill="none"/><path d="M1 14l4-3h14v7l-3 3H1zM1 14h15v7M16 14l4-3M5 11v7H1M5 18h12" stroke="#202020"/></svg></button>
  </div>
  <div class="group">
    <i class="grip"></i>
    <button class="tool" aria-label="Measure between"><svg viewBox="0 0 22 22"><path d="M0 6h19M3 2L0 6l3 4M16 2l3 4-3 4" stroke="#1018a0"/><path d="M0 12h19v6H0z" fill="#f8c8b8" stroke="#101030"/><path d="M3 12v3M6 12v3M9 12v3M12 12v3M15 12v3"/><path d="M0 20h19" stroke="#60d0e8" stroke-width="1.500"/></svg></button>
    <button class="tool" aria-label="Measure item"><svg viewBox="0 0 22 22"><path d="M3 1h14v12h1v3h-2v5h-4v-5H3v-3h9V5H3z" fill="#606068"/><circle cx="5" cy="8.500" r="4" fill="#40b0a8" stroke="#104870"/><circle cx="5" cy="7" r="1.500" fill="#d8f0a0" stroke="none"/></svg></button>
    <button class="tool" aria-label="Measure inertia"><svg viewBox="0 0 22 22"><circle cx="8" cy="3" r="2" stroke-width="1.500"/><path d="M3 8l3-2h4l3 2v11q-5 3-10 0z" fill="#a09020"/><path d="M6 8v12" stroke="#d8c850" stroke-width="2"/></svg></button>
  </div>
  <div class="group">
    <i class="grip"></i>
    <button class="tool" aria-label="Capture"><svg viewBox="0 0 22 22"><path d="M0 6h20v10H0z" fill="#101830" stroke-width="1.200"/><path d="M0 5h20v3H0z" fill="#d8d8e0"/><path d="M8 5l1-2h3l1 2z" fill="#d8d080"/><ellipse cx="10" cy="13" rx="4.500" ry="5" fill="#fff"/><ellipse cx="10" cy="13" rx="3.200" ry="3.700" fill="#000"/><path d="M9 10l1 4 2-4" stroke="#fff"/></svg></button>
  </div>
  <div class="group">
    <i class="grip"></i>
    <button class="tool more" aria-label="Sketch analysis"><svg viewBox="0 0 22 22"><path d="M1 16l9-6 11 4-10 8z" fill="#ffffa0"/><path d="M1 14l9-5 11 4-10 7z" fill="#fff8c0"/><path d="M1 7l9-6 3 5-2 8-9 3 1-8z" fill="#ffe898"/><path d="M20 4l-8 11" stroke="#1030a0" stroke-width="2"/></svg></button>
    <button class="tool more" aria-label="Import"><svg viewBox="0 0 22 22"><path d="M1 9V2h4l2 2h4v3h3l-3 3H1z" fill="#ffffa0"/><path d="M14 2q5 1 5 7M16 6l3 3 2-3" stroke="#1010c0"/><path d="M4 16l8-3 9 3-9 6z" fill="#e8e890"/><path d="M4 14l8-4 9 4-9 5z" fill="#ffff60"/></svg></button>
  </div>
  <div class="group">
    <i class="grip"></i>
    <button class="tool" aria-label="Draft analysis"><svg viewBox="0 0 22 22"><path d="M0 14l5-5h15l-7 5z" fill="#58c0f0"/><path d="M0 14h11v7H0z" fill="#108080"/><path d="M11 21V18l9-10v6l-7 7z" fill="#802010"/><path d="M9 13V1" stroke="#f0e830" stroke-width="3"/><path d="M5 9L1 5M0 8V5h3" stroke="#b02010"/></svg></button>
    <button class="tool" aria-label="Curvature analysis"><svg viewBox="0 0 22 22"><path d="M1 21Q5 12 0 6q8-6 19-5 2 9 0 20l-7-8z" fill="#20a0a8" stroke="#101850" stroke-width="1.300"/><path d="M6 10q0-6 5-8 3 4-2 9z" fill="#f0e850"/><path d="M7 9q0-4 3-5 0 4-2 5z" fill="#b02010"/><path d="M12 4q4 5 6 11V3z" fill="#2060c0"/><path d="M17 8v8" stroke="#f0e850"/></svg></button>
    <button class="tool" aria-label="Tap and thread analysis"><svg viewBox="0 0 22 22"><rect x="0" y="0" width="20" height="21" rx="2" fill="#ffe898" stroke="#303030"/><ellipse cx="10" cy="10" rx="7.500" ry="8"/><path d="M10 0v20M0 10h20"/><circle cx="14" cy="14" r="5" fill="#f0f0e8" fill-opacity=".8"/><path d="M12 17l9 4" stroke="#2060a0" stroke-width="2"/></svg></button>
    <button class="tool" aria-label="Dress-up analysis"><svg viewBox="0 0 22 22"><path d="M1 5l6-4h12v5l-6 4H1z" fill="#209898" stroke="none"/><path d="M3 9l13-3v8L3 16z" fill="#802010" stroke="none"/><path d="M1 8l4 6 14-5v4L5 17l-3 0z" fill="#f0e830" stroke="none"/><path d="M1 16h12l6-4v5l-8 4H1z" fill="#209898" stroke="none"/></svg></button>
  </div>
  <svg class="brand" viewBox="0 0 120 92"><g fill="none" stroke-linecap="round" stroke-width="6"><path d="M32 4h15q2 4-12 22" stroke="#b85020"/><path d="M18 40q22-4 18 10-6 16-32 20l12-32" stroke="#404080"/><path d="M66 28q-22 0-18 10 14 10 8 20-6 5-18 4" stroke="#f0a028"/></g><text x="22" y="87">CATIA</text></svg>
</div>

<footer class="statusbar">
  <label for="power-input">Select an object or a command</label>
  <input id="power-input" type="text">
  <button aria-label="Dialog box"><svg viewBox="0 0 90 58"><path d="M26 47h42V16h-5v27H30z" fill="#a0a0a8"/><path d="M32 18h17v19H32z" fill="#e8e8f4" stroke="#a0a0a8" stroke-width="4"/><path d="M26 50h45V16M34 39h18V18" fill="none" stroke="#fff" stroke-width="3"/></svg></button>
  <button aria-label="Information"><svg viewBox="0 0 90 58"><path d="M26 47h42V16h-5v27H30z" fill="#a0a0a8"/><circle cx="43" cy="27" r="15" fill="#e4e4f2" stroke="#a0a0a8" stroke-width="3"/><path d="M43 16v5M39 25h5v11M37 37h13" fill="none" stroke="#a0a0a8" stroke-width="4"/><path d="M26 50h45V16" fill="none" stroke="#fff" stroke-width="3"/></svg></button>
</footer>
</body>
</html>
```
FILE: styles.css
```css
* { box-sizing: border-box; }

body {
  margin: 0;
  min-height: 100vh;
  display: flex;
  flex-direction: column;
  background: #cfcee6;
  color: #14141c;
  font: 32px/40px "Noto Sans", "Open Sans", sans-serif;
}

button {
  border: 0;
  padding: 0;
  background: none;
  color: inherit;
  font: inherit;
}

.titlebar { height: 11px; background: #18345e; }

/* Menu bar */
.menubar {
  height: 53px;
  display: flex;
  align-items: center;
  background: linear-gradient(#c8d0f0, #d1cfe6 14px, #cfcee6);
}
.app-logo { width: 65px; height: 53px; padding: 4px 3px 3px; background: #fff; }
.menus { display: flex; flex: 1; height: 100%; }
.menu { padding: 0 33px; white-space: nowrap; }
.menu.start { width: 135px; padding: 0 0 0 19px; text-align: left; background: #ffe6b8; }
.menu.vpm { padding: 0 21px 0 20px; }
.menu.vpm + .menu { padding-left: 20px; }
.menu u { text-decoration-thickness: 3px; text-underline-offset: 4px; }
.window-controls {
  display: flex;
  gap: 6px;
  height: 100%;
  padding: 2px 4px 2px 0;
  background: #eeeef2;
}
.window-controls button { width: 48px; background: #fff; }
.window-controls svg { display: block; width: 48px; fill: none; stroke: #85858f; }

/* Toolbars */
.toolbar { display: grid; background: linear-gradient(#fff, #fff 8px, #cfcee6 26px, #cfcee6 76px, #9a99aa); }
.top-bar {
  height: 104px;
  border-bottom: 3px solid #55555c;
  grid-template-columns: 331fr 321fr 342fr 231fr 116fr 186fr 128fr 290fr 619fr 1273fr;
}
.bottom-bar {
  height: 108px;
  border-top: 1px solid #77778c;
  border-bottom: 3px solid #55555c;
  grid-template-columns: 16fr 851fr 599fr 1009fr 133fr 288fr 203fr 227fr 374fr 137fr;
}
.group { display: flex; align-items: flex-start; gap: 17px; min-width: 0; padding-top: 23px; }
.bottom-bar .group { padding-top: 26px; }
.grip {
  flex: none;
  width: 7px;
  height: 45px;
  margin: -12px 12px 0 0;
  border: solid #9a9aa8;
  border-width: 0 3px 3px 0;
  background: #fff;
}
.split { padding-left: 20px; border-left: 3px solid #fff; }
.tool { position: relative; flex: none; width: 62px; height: 62px; }
.tool.narrow { width: 52px; }
.tool svg {
  display: block;
  width: 62px;
  height: 62px;
  fill: none;
  stroke: #101018;
  overflow: visible;
}
.tool.more { margin-right: 3px; }
.tool.more::after {
  content: "";
  position: absolute;
  left: 52px;
  top: 61px;
  border: solid transparent;
  border-width: 12px 10px 0;
  border-top-color: #000;
}
.tool.lit::before {
  content: "";
  position: absolute;
  left: 50px;
  top: 58px;
  width: 25px;
  height: 18px;
  background: #fff;
}
.tool text { stroke: none; }
.abc { font: 7px "Liberation Sans", sans-serif; fill: #101840; }
.dims { font: bold 10px "Liberation Sans Narrow", "Liberation Sans", sans-serif; fill: #101018; }

.body-picker { position: relative; flex: none; width: 460px; margin: 2px 0 0 -4px; }
.body-picker select {
  display: block;
  width: 100%;
  height: 62px;
  padding: 0 8px;
  appearance: none;
  border: 2px solid #acacb4;
  border-radius: 0;
  background: #e2e2e2;
  color: inherit;
  font: inherit;
}
.body-picker svg { position: absolute; right: 12px; top: 25px; width: 24px; height: 14px; pointer-events: none; }

.brand { width: 100%; height: 92px; padding-right: 12px; }
.brand text { font: italic bold 26px "DejaVu Sans", sans-serif; fill: #404078; }

/* Workspace */
.workspace { flex: 1; display: grid; grid-template-columns: 1fr 107px; }
.viewport {
  position: relative;
  border: solid #8c8c92;
  border-width: 5px 0 0 5px;
  background: #333366;
}
.scene { position: absolute; inset: 0; width: 100%; height: 100%; }
.axis-label { font: 32px "DejaVu Sans", sans-serif; }

.tree {
  position: relative;
  margin: 0;
  padding: 170px 0 0;
  list-style: none;
  color: #fff;
  font-size: 29px;
}
.tree li { display: flex; align-items: center; gap: 2px; height: 67px; }
.tree svg { flex: none; height: 67px; }

.side-bar {
  display: grid;
  grid-template-rows: 132fr 132fr 133fr 850fr 186fr 197fr;
  padding: 16px 0 0 25px;
  border-top: 1px solid #9c9ca4;
  background: linear-gradient(90deg, #fff, #fff 14px, #cfcee6 30px, #cfcee6 80px, #a3a2b8);
}
.side-bar .group { flex-direction: column; gap: 18px; padding: 0; min-height: 0; }
.side-bar .grip { width: 48px; height: 7px; margin: 0 0 9px -12px; }
.side-bar .tool.more { margin: 0 0 3px; }
.side-bar .tool.more::after { left: 56px; }

/* Status bar */
.statusbar {
  display: grid;
  grid-template-columns: 1fr 842px 92px 92px;
  gap: 2px;
  height: 62px;
  padding: 4px 4px 2px 8px;
}
.statusbar label { align-self: center; }
.statusbar input {
  min-width: 0;
  padding: 0 8px;
  border: 3px solid #84848c;
  background: #fff;
  font: inherit;
}
.statusbar button {
  border: solid #fff;
  border-width: 3px 0 0 3px;
  box-shadow: inset -3px 0 #85858f;
}
.statusbar svg { display: block; width: 88px; }
```
